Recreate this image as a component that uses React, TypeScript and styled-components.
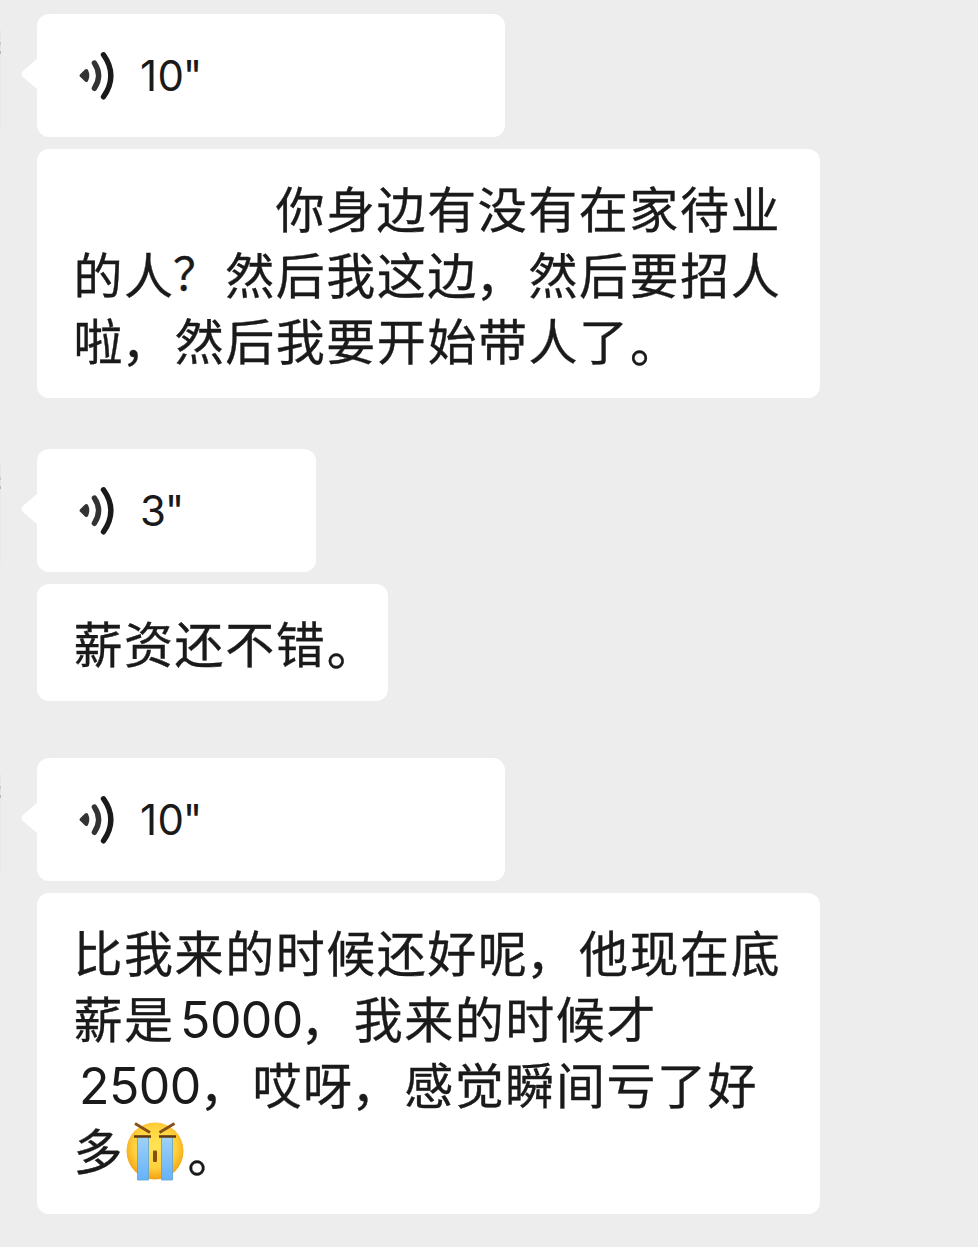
import React from "react";
import styled, { createGlobalStyle } from "styled-components";

const GlobalStyle = createGlobalStyle`
  * { box-sizing: border-box; }
  body { margin: 0; background: #ededed; }
`;

const Chat = styled.main`
  position: relative;
  width: 978px;
  height: 1247px;
  overflow: hidden;
  padding: 14px 0 0 37px;
  display: flex;
  flex-direction: column;
  align-items: flex-start;
  background: #ededed;
  color: #1a1a1a;
  font-family: Inter, "Noto Sans CJK SC", sans-serif;
`;

const Message = styled.section<{ $gap: number }>`
  display: flex;
  flex-direction: column;
  align-items: flex-start;
  gap: 12px;
  margin-bottom: ${(p) => p.$gap}px;
`;

const VoiceBubble = styled.div<{ $width: number }>`
  position: relative;
  width: ${(p) => p.$width}px;
  height: 123px;
  padding-left: 42px;
  display: flex;
  align-items: center;
  gap: 25px;
  background: #fff;
  border-radius: 12px;
`;

const Tail = styled.svg`
  position: absolute;
  left: -16px;
  top: 43px;
`;

const AvatarEdge = styled.i`
  position: absolute;
  left: -37px;
  top: 16px;
  width: 1px;
  height: 98px;
  background: linear-gradient(#e6e6e4 0 12px, #cacac8 12px 15px, #e4e4e2 15px 21px, #bababa 21px 24px, #e8e8e5 24px);
`;

const Duration = styled.span`
  font-size: 42px;
  line-height: 50px;
  letter-spacing: 0.3px;
  white-space: nowrap;
`;

const Seconds = styled.span`
  margin-left: -1.5px;
`;

const TextBubble = styled.div<{ $width: number; $height: number }>`
  width: ${(p) => p.$width}px;
  height: ${(p) => p.$height}px;
  padding: 25px 0 0 36.5px;
  background: #fff;
  border-radius: 12px;
`;

const Line = styled.p<{ $indent?: number }>`
  display: flex;
  margin: 0;
  padding-left: ${(p) => p.$indent ?? 0}px;
  height: 66px;
  align-items: center;
  font-family: "Noto Sans CJK SC", sans-serif;
  font-size: 49px;
  line-height: 66px;
  letter-spacing: 1.55px;
  white-space: pre;
  -webkit-text-stroke: 0.35px #1a1a1a;
`;

const Mark = styled.span<{ $x: number; $y: number; $scale: number }>`
  transform: translate(${(p) => p.$x}px, ${(p) => p.$y}px) scale(${(p) => p.$scale});
`;

const Amount = styled.span`
  width: 128.5px;
  padding: 5px 0 0 5.5px;
  font-family: Inter, sans-serif;
  font-size: 50px;
  letter-spacing: -0.6px;
  -webkit-text-stroke: 0;
`;

const Emoji = styled.svg`
  flex: none;
  margin: 5px 2px 0 1px;
`;

const markOffsets: Record<string, [number, number, number]> = {
  "，": [-2.5, 0.5, 1],
  "。": [0.5, 2, 1],
  "？": [-4, -1, 0.92],
};

function Words({ children }: { children: string }) {
  return (
    <>
      {children.split(/([，。？])/).filter(Boolean).map((part, i) => {
        const offset = markOffsets[part];
        return offset ? (
          <Mark key={i} $x={offset[0]} $y={offset[1]} $scale={offset[2]}>{part}</Mark>
        ) : (
          <span key={i}>{part}</span>
        );
      })}
    </>
  );
}

function Voice({ seconds, width }: { seconds: number; width: number }) {
  return (
    <VoiceBubble $width={width}>
      <AvatarEdge />
      <Tail width="17" height="34" viewBox="0 0 17 34">
        <path d="M17 1 L2 14 Q-1 17 2 20 L17 33 Z" fill="#fff" />
      </Tail>
      <svg width="36" height="50" viewBox="0 0 36 50" fill="none" strokeLinecap="round">
        <path d="M1.2 23.2 L6 18.4 Q8 17.3 9 19 Q11.6 24.5 9 30 Q8 31.6 6 30.4 L1.2 25.8 Q-0.2 24.5 1.2 23.2Z" fill="#333" />
        <path d="M15.4 12 Q23.8 24.5 15.4 37.3" stroke="#333" strokeWidth="5.4" />
        <path d="M24.5 3.8 Q39.2 24.5 24.5 45.8" stroke="#1a1a1a" strokeWidth="5.4" />
      </svg>
      <Duration>{seconds}<Seconds>"</Seconds></Duration>
    </VoiceBubble>
  );
}

function CryingFace() {
  return (
    <Emoji width="60" height="62" viewBox="0 0 60 62">
      <defs>
        <radialGradient id="face" cx="50%" cy="42%" r="58%">
          <stop offset="0" stopColor="#ffe455" />
          <stop offset="0.65" stopColor="#ffd03c" />
          <stop offset="1" stopColor="#f3a012" />
        </radialGradient>
        <linearGradient id="tears" x1="0" y1="0" x2="0" y2="1">
          <stop offset="0" stopColor="#a0d2f5" />
          <stop offset="1" stopColor="#66b2fa" />
        </linearGradient>
      </defs>
      <circle cx="30" cy="30" r="28.5" fill="url(#face)" />
      <path d="M12.5 15H23.5V59H12.5ZM36.5 15H47.5V59H36.5Z" fill="url(#tears)" stroke="#5ea3cf" strokeWidth="0.8" />
      <path d="M9 15.5H26M34 15.5H51" stroke="#633808" strokeWidth="2.6" />
      <path d="M10 2.5L25 11.5M34.5 11.5L49.5 2.5" stroke="#855016" strokeWidth="2.8" />
      <rect x="28" y="29.5" width="4" height="11.5" rx="1.2" fill="#8a4e0c" />
    </Emoji>
  );
}

export default function App() {
  return (
    <>
      <GlobalStyle />
      <Chat>
        <Message $gap={51}>
          <Voice seconds={10} width={468} />
          <TextBubble $width={783} $height={249}>
            <Line $indent={202}><Words>你身边有没有在家待业</Words></Line>
            <Line><Words>的人？然后我这边，然后要招人</Words></Line>
            <Line><Words>啦，然后我要开始带人了。</Words></Line>
          </TextBubble>
        </Message>
        <Message $gap={57}>
          <Voice seconds={3} width={279} />
          <TextBubble $width={351} $height={117}>
            <Line><Words>薪资还不错。</Words></Line>
          </TextBubble>
        </Message>
        <Message $gap={0}>
          <Voice seconds={10} width={468} />
          <TextBubble $width={783} $height={321}>
            <Line><Words>比我来的时候还好呢，他现在底</Words></Line>
            <Line><Words>薪是</Words><Amount>5000</Amount><Words>，我来的时候才</Words></Line>
            <Line><Amount>2500</Amount><Words>，哎呀，感觉瞬间亏了好</Words></Line>
            <Line><Words>多</Words><CryingFace /><Words>。</Words></Line>
          </TextBubble>
        </Message>
      </Chat>
    </>
  );
}
